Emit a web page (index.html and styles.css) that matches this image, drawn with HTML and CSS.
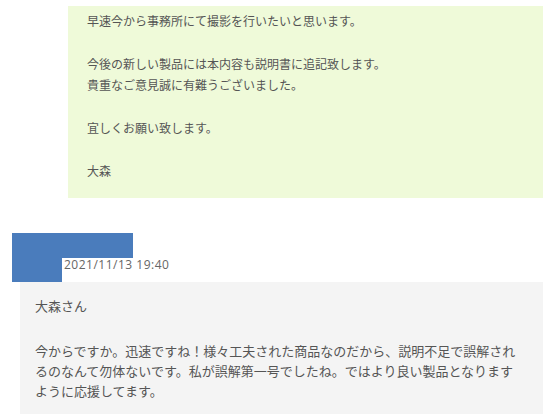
FILE: index.html
```html
<!DOCTYPE html>
<html lang="ja">

<head>
  <meta charset="UTF-8">
  <meta name="viewport" content="width=device-width, initial-scale=1.0">
  <title>コメント</title>
  <link rel="stylesheet" href="styles.css">
</head>

<body>
  <div class="thread">
    <!-- reply from the shop -->
    <div class="reply">
      <p class="msg-text">早速今から事務所にて撮影を行いたいと思います。</p>
      <p class="msg-text">今後の新しい製品には本内容も説明書に追記致します。<br>貴重なご意見誠に有難うございました。</p>
      <p class="msg-text">宜しくお願い致します。</p>
      <p class="msg-text">大森</p>
    </div>

    <!-- next comment -->
    <div class="comment">
      <div class="comment-head">
        <div class="avatar"></div>
        <div class="meta">
          <div class="name-hidden"></div>
          <span class="date">2021/11/13 19:40</span>
        </div>
      </div>
      <div class="comment-body">
        <p class="msg-text">大森さん</p>
        <p class="msg-text">今からですか。迅速ですね！様々工夫された商品なのだから、説明不足で誤解されるのなんて勿体ないです。私が誤解第一号でしたね。ではより良い製品となりますように応援してます。</p>
      </div>
    </div>
  </div>
</body>

</html>
```

FILE: styles.css
```css
body {
  margin: 0;
  background: #fff;
  font-family: "Noto Sans CJK JP", "Noto Sans", sans-serif;
  color: #555;
}

.thread {
  width: 543px;
  padding-top: 6px;
}

/*reply block, green*/
.reply {
  margin-left: 68px;
  background-color: #effad9;
  padding: 4px 20px 17px 19px;
}

.msg-text {
  margin: 0;
  font-size: 12px;
  line-height: 21px;
}

.msg-text + .msg-text {
  margin-top: 22px;
}

.comment {
  margin-top: 35px;
}

.comment-head {
  display: flex;
  margin-left: 12px;
}

.avatar {
  width: 50px;
  height: 49px;
  background-color: #4a7cbc;
}

.meta {
  display: flex;
  flex-direction: column;
}

.name-hidden {
  width: 71px;
  height: 25px;
  background-color: #4a7cbc;
}

.date {
  margin-left: 2px;
  font-family: "Open Sans", sans-serif;
  font-size: 12px;
  letter-spacing: 0.5px;
  line-height: 14px;
  color: #666;
}

/*comment body, grey*/
.comment-body {
  margin-left: 20px;
  background-color: #f4f4f4;
  padding: 14px 22px 30px 15px;
}

.comment-body .msg-text {
  font-size: 13px;
  line-height: 20px;
}

.comment-body .msg-text + .msg-text {
  margin-top: 25px;
}
```
